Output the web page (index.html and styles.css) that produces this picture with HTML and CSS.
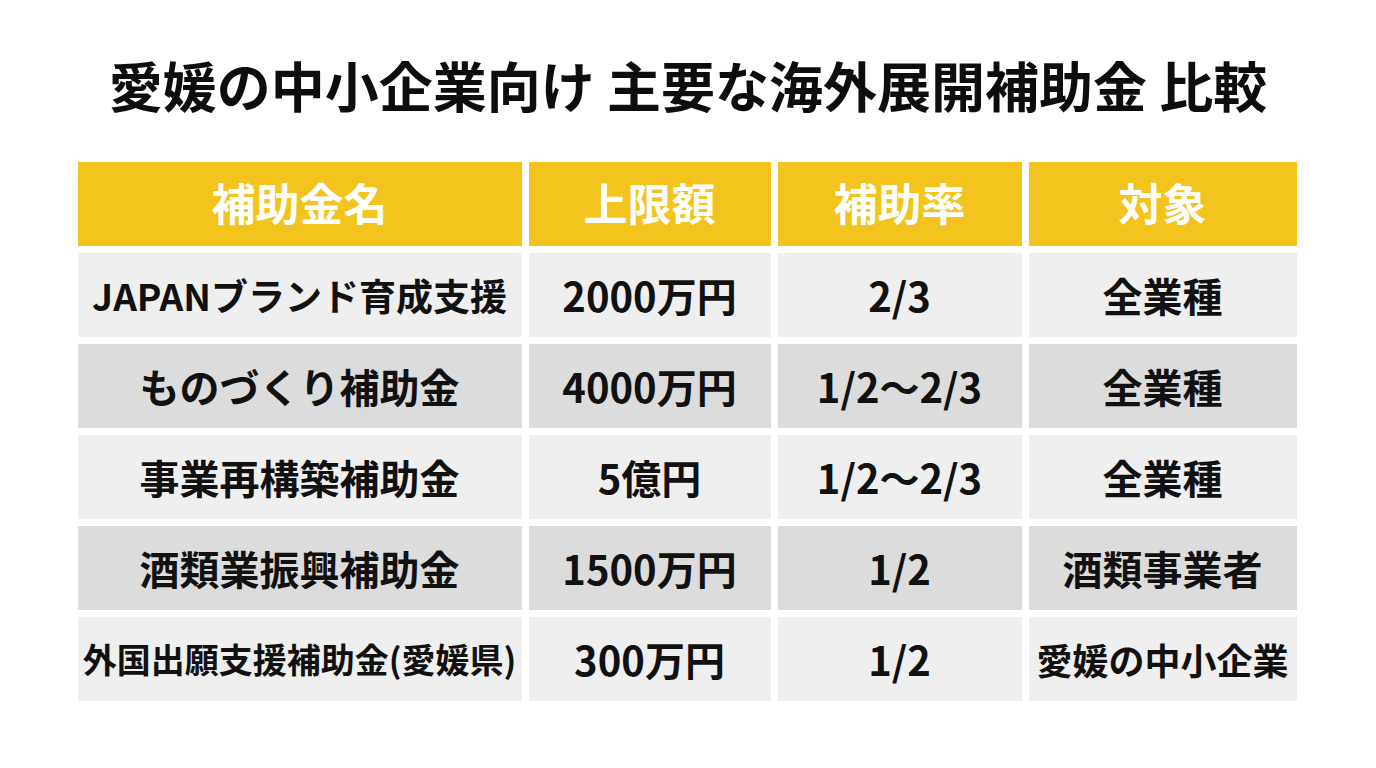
FILE: index.html
```html
<!DOCTYPE html>
<html lang="ja">
<head>
<meta charset="utf-8">
<title>愛媛の中小企業向け 主要な海外展開補助金 比較</title>
<link rel="stylesheet" href="styles.css">
</head>
<body>
<main class="page">
  <h1 class="title">愛媛の中小企業向け 主要な海外展開補助金 比較</h1>
  <div class="table">
    <div class="cell head">補助金名</div>
    <div class="cell head">上限額</div>
    <div class="cell head">補助率</div>
    <div class="cell head">対象</div>

    <div class="cell light lg">JAPANブランド育成支援</div>
    <div class="cell light">2000万円</div>
    <div class="cell light">2/3</div>
    <div class="cell light">全業種</div>

    <div class="cell dark">ものづくり補助金</div>
    <div class="cell dark">4000万円</div>
    <div class="cell dark">1/2〜2/3</div>
    <div class="cell dark">全業種</div>

    <div class="cell light">事業再構築補助金</div>
    <div class="cell light">5億円</div>
    <div class="cell light">1/2〜2/3</div>
    <div class="cell light">全業種</div>

    <div class="cell dark">酒類業振興補助金</div>
    <div class="cell dark">1500万円</div>
    <div class="cell dark">1/2</div>
    <div class="cell dark">酒類事業者</div>

    <div class="cell light sm">外国出願支援補助金(愛媛県)</div>
    <div class="cell light">300万円</div>
    <div class="cell light">1/2</div>
    <div class="cell light md">愛媛の中小企業</div>
  </div>
</main>
</body>
</html>
```

FILE: styles.css
```css
* { box-sizing: border-box; }
html, body {
  margin: 0;
  padding: 0;
  background: #ffffff;
}
body {
  font-family: "Noto Sans CJK JP", "Noto Sans", sans-serif;
  color: #111111;
  width: 1376px;
  height: 768px;
  overflow: hidden;
}
.page {
  display: flex;
  flex-direction: column;
  align-items: center;
  padding-top: 58px;
}
.title {
  margin: 0 0 50px 0;
  font-size: 54px;
  line-height: 54px;
  font-weight: 700;
  letter-spacing: 0;
  text-align: center;
  color: #0d0d0d;
}
.table {
  display: grid;
  grid-template-columns: 444px 242px 244px 268px;
  grid-auto-rows: 84px;
  column-gap: 7px;
  row-gap: 7px;
  margin-left: -2px;
}
.cell {
  display: flex;
  align-items: center;
  justify-content: center;
  font-weight: 700;
  font-size: 40px;
  line-height: 1;
  white-space: nowrap;
  color: #111111;
}
.head {
  background: #f2c41d;
  color: #ffffff;
  font-size: 44px;
  padding-bottom: 4px;
}
.light { background: #efefef; }
.dark { background: #dcdcdc; }
.lg { font-size: 37px; }
.sm { font-size: 34px; }
.md { font-size: 36px; }
```
